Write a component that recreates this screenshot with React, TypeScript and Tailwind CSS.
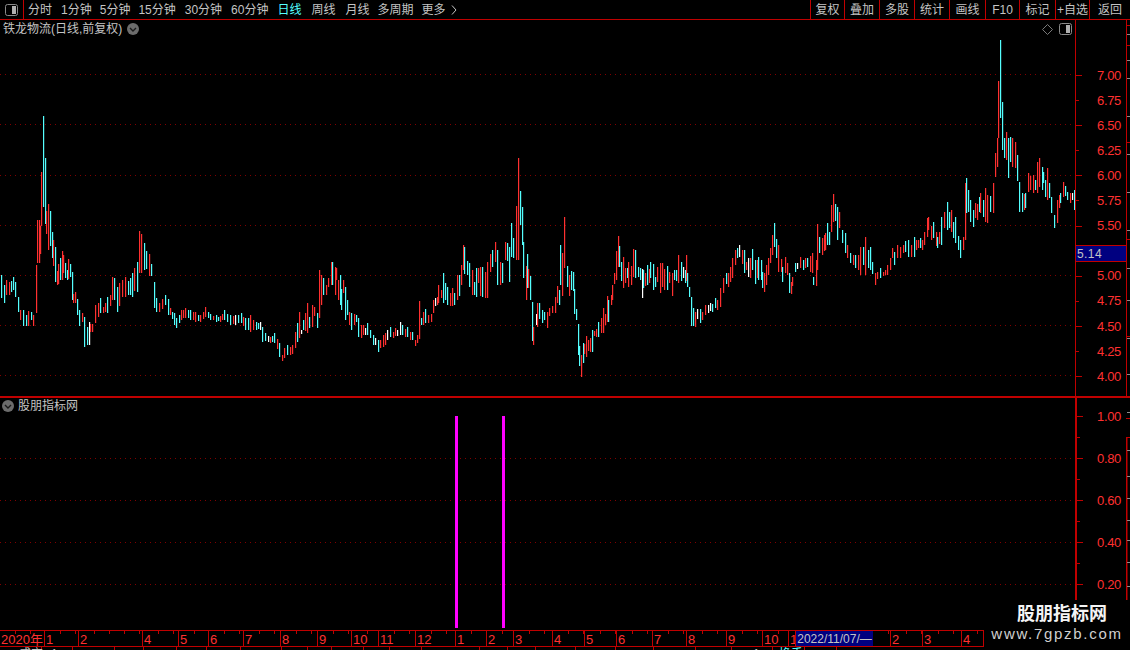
import React from 'react'

const RED = '#ff3030'
const CYAN = '#54ffff'
const WHITE = '#ffffff'
const LINE = '#c00000'

// [x, top, bottom, colour] read off the chart, gaps get filled in below
type K = [number, number, number, string]
const R = RED
const C = CYAN
const W = WHITE

const keys: K[] = [
  [1, 275, 298, C], [4, 285, 303, C], [6, 280, 295, R], [9, 282, 295, R], [13, 277, 290, C], [15, 282, 297, C],
  [18, 297, 312, C], [20, 310, 320, R], [23, 310, 326, C], [26, 315, 326, C], [28, 311, 326, R], [31, 312, 320, C], [33, 315, 326, R],
  [36, 265, 313, R], [37, 220, 263, R], [39, 220, 263, R], [40, 226, 254, R], [41, 172, 226, R], [43, 116, 207, C],
  [45, 158, 224, C], [46, 211, 234, R], [48, 204, 250, R], [50, 211, 246, C], [52, 232, 258, C], [53, 240, 266, R],
  [55, 247, 282, C], [57, 271, 285, R], [58, 264, 284, R], [60, 258, 280, C], [62, 251, 280, R], [63, 255, 273, R],
  [65, 263, 278, C], [67, 270, 280, C], [68, 259, 279, R], [70, 264, 277, C], [72, 272, 300, C], [73, 294, 303, R],
  [75, 292, 303, R], [77, 299, 315, C], [79, 310, 326, C], [82, 313, 322, R], [84, 317, 347, C], [87, 327, 345, C],
  [89, 322, 345, W], [90, 324, 332, R], [92, 324, 332, R], [95, 305, 323, R], [100, 298, 313, C], [103, 307, 313, R], [107, 297, 313, C],
  [110, 295, 306, R], [112, 277, 300, R], [114, 278, 300, C], [117, 287, 312, C], [119, 283, 306, R], [122, 280, 297, R],
  [125, 277, 297, R], [128, 281, 295, C], [132, 273, 297, C], [134, 268, 291, R], [137, 262, 292, C], [139, 231, 273, R],
  [141, 234, 273, R], [144, 243, 270, C], [146, 251, 269, C], [149, 254, 276, R], [151, 264, 276, C],
  [154, 282, 308, C], [156, 298, 312, C], [159, 303, 312, R], [162, 299, 309, R], [165, 295, 305, C], [168, 299, 315, C],
  [170, 308, 315, R], [174, 313, 325, C], [176, 318, 328, C], [181, 310, 320, R], [185, 308, 318, R], [190, 310, 320, C],
  [195, 312, 322, R], [200, 315, 322, R], [205, 307, 317, R], [210, 314, 320, C], [216, 315, 322, C], [220, 316, 322, R],
  [224, 310, 320, C], [230, 315, 325, C], [235, 315, 325, W], [241, 313, 323, C], [245, 318, 330, C], [250, 315, 332, R],
  [256, 322, 330, C], [260, 322, 330, W], [262, 327, 342, C], [268, 336, 342, W], [270, 337, 343, R], [274, 333, 343, C],
  [279, 343, 357, C], [282, 355, 361, R], [284, 348, 358, R], [287, 345, 355, C], [290, 347, 355, R],
  [292, 345, 354, R], [295, 332, 348, R], [299, 312, 338, R], [301, 330, 334, W], [303, 320, 330, C], [307, 303, 333, R],
  [309, 317, 328, C], [312, 305, 327, R], [314, 307, 316, R], [317, 313, 328, C], [319, 270, 318, R], [321, 275, 305, R],
  [323, 278, 295, C], [326, 285, 295, R], [328, 278, 287, R], [331, 262, 285, R], [332, 262, 285, C], [335, 267, 295, R],
  [336, 268, 280, R], [338, 280, 300, R], [340, 275, 305, C], [341, 289, 310, C], [343, 280, 293, R], [345, 287, 320, C],
  [347, 300, 315, C], [349, 312, 325, R], [351, 313, 330, C], [354, 314, 325, R], [356, 315, 322, C], [358, 318, 337, C],
  [361, 325, 338, R], [363, 325, 335, R], [365, 328, 335, W], [367, 323, 335, C], [370, 330, 338, C], [373, 335, 345, C],
  [375, 338, 345, W], [378, 340, 352, C], [380, 340, 348, R], [383, 335, 347, R], [385, 333, 345, R], [387, 330, 340, W],
  [390, 327, 337, C], [393, 332, 338, R], [395, 328, 336, R], [397, 330, 336, W], [400, 322, 335, W], [402, 325, 335, C],
  [405, 329, 337, R], [407, 327, 337, C], [410, 332, 340, R], [412, 332, 340, C], [415, 340, 346, R], [417, 335, 343, R],
  [419, 301, 339, R], [421, 318, 325, C], [423, 312, 325, R], [425, 309, 323, C], [428, 315, 323, R], [431, 314, 322, R],
  [433, 300, 313, R], [435, 298, 306, W], [437, 297, 305, R], [438, 285, 303, R], [441, 290, 298, R], [443, 273, 303, C],
  [445, 283, 300, C], [447, 287, 305, C], [450, 293, 306, R], [452, 288, 306, R], [454, 293, 305, C], [457, 275, 300, R],
  [459, 275, 296, C], [461, 265, 285, R], [463, 245, 270, R], [464, 247, 274, C], [467, 261, 275, C], [469, 263, 287, C],
  [472, 270, 295, R], [474, 282, 295, C], [476, 268, 297, C], [478, 268, 283, R], [480, 267, 296, R], [482, 267, 297, C],
  [485, 272, 298, R], [487, 262, 298, R], [490, 254, 272, R], [492, 250, 267, C], [495, 242, 262, R], [497, 250, 285, C],
  [500, 262, 285, R], [502, 263, 283, C], [505, 242, 260, R], [507, 243, 261, C], [509, 247, 282, C], [511, 223, 257, C],
  [513, 238, 258, C], [516, 206, 260, R], [518, 158, 260, R], [520, 191, 225, C], [522, 207, 245, C], [523, 242, 278, C],
  [526, 266, 300, R], [527, 254, 288, C], [528, 269, 288, R], [530, 276, 300, C], [532, 302, 341, C], [533, 327, 345, R],
  [536, 314, 325, W], [537, 303, 327, R], [539, 303, 319, C], [542, 310, 323, C], [544, 312, 320, C], [547, 312, 328, R],
  [549, 308, 316, R], [552, 306, 313, R], [555, 297, 313, R], [557, 286, 303, R], [559, 290, 305, C], [560, 245, 285, C],
  [562, 253, 296, R], [564, 217, 268, R], [567, 266, 287, C], [569, 275, 296, R], [571, 271, 290, C], [573, 272, 291, C],
  [574, 289, 314, C], [576, 309, 320, C], [578, 324, 355, C], [579, 346, 366, C], [581, 355, 377, R], [583, 343, 363, C],
  [584, 344, 354, R], [586, 336, 357, R], [588, 340, 351, R], [590, 338, 352, R], [592, 330, 352, C], [594, 331, 336, R],
  [596, 329, 337, R], [598, 322, 337, C], [601, 318, 333, R], [603, 308, 333, R], [605, 314, 325, R], [607, 296, 322, R],
  [608, 300, 322, C], [611, 295, 305, R], [612, 285, 300, R], [614, 273, 284, R], [616, 251, 280, R], [618, 236, 267, R],
  [619, 246, 267, C], [621, 262, 281, C], [623, 257, 288, R], [625, 268, 283, R], [627, 268, 278, C], [628, 262, 287, R],
  [631, 266, 285, R], [633, 249, 277, R], [635, 250, 278, C], [638, 267, 277, C], [640, 268, 280, C], [642, 269, 298, W],
  [643, 270, 288, C], [645, 273, 286, R], [647, 265, 285, C], [649, 269, 283, R], [650, 262, 278, C], [653, 264, 290, C],
  [655, 277, 287, C], [657, 267, 282, R], [660, 263, 293, R], [662, 263, 287, R], [664, 269, 290, R], [667, 266, 290, C],
  [669, 272, 283, R], [672, 273, 296, R], [674, 270, 280, C], [676, 270, 281, C], [678, 255, 283, R], [681, 262, 281, C],
  [683, 267, 278, W], [685, 270, 283, C], [686, 255, 281, R], [687, 273, 287, C], [689, 287, 297, C], [691, 297, 326, C],
  [693, 308, 326, C], [695, 312, 327, R], [697, 309, 319, W], [700, 309, 323, C], [702, 312, 320, R], [705, 305, 315, R],
  [708, 305, 313, W], [710, 303, 311, W], [712, 304, 312, C], [715, 298, 308, C], [717, 300, 310, R], [720, 288, 307, R],
  [723, 278, 293, R], [726, 273, 284, C], [728, 273, 287, R], [732, 258, 278, R], [735, 250, 265, R], [737, 248, 258, C],
  [739, 245, 257, W], [742, 250, 264, R], [744, 250, 273, C], [746, 262, 270, R], [748, 258, 277, W], [750, 258, 278, R],
  [752, 249, 270, C], [755, 260, 284, C], [757, 260, 278, R], [758, 257, 280, C], [761, 260, 280, C], [762, 272, 288, C],
  [764, 273, 292, R], [766, 265, 285, R], [768, 258, 275, R], [770, 248, 263, R], [772, 235, 255, R], [774, 223, 247, C],
  [776, 239, 258, C], [778, 245, 272, R], [781, 259, 272, R], [782, 267, 282, C], [785, 257, 273, R], [787, 263, 275, R],
  [789, 273, 293, C], [791, 282, 294, R], [792, 277, 286, R], [795, 263, 272, C], [797, 263, 269, W], [800, 257, 268, R],
  [803, 260, 270, C], [805, 258, 268, R], [807, 258, 267, C], [810, 256, 272, R], [812, 253, 273, R], [813, 277, 285, C],
  [816, 260, 286, R], [817, 224, 270, R], [819, 237, 253, C], [822, 238, 255, R], [824, 235, 251, R], [825, 233, 250, R],
  [827, 223, 245, C], [829, 232, 245, C], [831, 205, 232, R], [833, 194, 222, R], [835, 204, 221, C], [837, 207, 240, C],
  [839, 212, 228, R], [842, 230, 243, C], [845, 233, 253, C], [847, 245, 258, R], [850, 253, 263, C], [855, 255, 268, C],
  [858, 255, 270, R], [860, 247, 275, R], [863, 247, 265, C], [865, 237, 275, R], [868, 250, 268, C], [870, 247, 270, C],
  [872, 262, 274, C], [875, 273, 285, R], [877, 272, 279, R], [880, 268, 278, C], [883, 272, 276, R], [887, 265, 275, R],
  [890, 258, 270, R], [892, 248, 258, R], [894, 252, 265, C], [897, 245, 258, R], [900, 247, 258, R], [903, 245, 253, R],
  [905, 241, 252, C], [908, 240, 257, C], [911, 245, 257, R], [914, 237, 257, C], [916, 240, 250, R], [920, 238, 248, C],
  [922, 240, 250, R], [924, 232, 245, R], [927, 218, 237, R], [928, 217, 230, R], [931, 226, 240, R], [933, 222, 238, C],
  [936, 232, 246, R], [937, 237, 248, C], [939, 232, 244, R], [941, 217, 245, C], [944, 212, 228, R], [947, 202, 230, C],
  [949, 212, 228, C], [951, 210, 232, R], [953, 222, 238, C], [955, 217, 243, C], [958, 236, 250, C], [960, 240, 258, C],
  [963, 237, 250, R], [965, 183, 240, R], [966, 178, 213, C], [968, 190, 212, C], [970, 200, 222, C], [973, 210, 227, C],
  [975, 203, 218, R], [977, 204, 220, R], [979, 197, 212, C], [980, 193, 213, R], [983, 200, 217, C], [985, 188, 222, R],
  [987, 195, 223, R], [990, 196, 212, C], [993, 183, 213, R], [995, 153, 177, R], [997, 138, 167, R], [998, 81, 138, R],
  [1000, 40, 118, C], [1002, 102, 150, C], [1004, 138, 158, C], [1006, 132, 160, R], [1008, 138, 178, C], [1010, 137, 162, C],
  [1012, 138, 167, R], [1015, 142, 168, R], [1017, 155, 181, C], [1019, 182, 212, C], [1022, 193, 212, C], [1024, 194, 210, R],
  [1025, 193, 208, C], [1028, 173, 192, R], [1030, 176, 190, R], [1033, 175, 193, R], [1035, 180, 190, C], [1037, 162, 193, R],
  [1039, 158, 187, R], [1042, 167, 190, C], [1043, 172, 183, C], [1045, 180, 197, C], [1047, 168, 200, R], [1049, 183, 198, C],
  [1051, 197, 213, C], [1054, 215, 228, C], [1057, 200, 223, R], [1059, 195, 208, R], [1060, 193, 203, C], [1063, 182, 197, R],
  [1065, 186, 196, C], [1067, 192, 200, C], [1070, 193, 203, R], [1072, 193, 200, W], [1074, 190, 210, C],
]

// keep the roughly 3px bar rhythm where the list above leaves a wider gap
const candles: K[] = keys.flatMap((k, i) => {
  const next = keys[i + 1]
  if (!next || next[0] - k[0] < 4) return [k]
  const mid: K = [
    Math.round((k[0] + next[0]) / 2),
    Math.round((k[1] + next[1]) / 2) + 1,
    Math.round((k[2] + next[2]) / 2) - 1,
    i % 2 === 0 ? R : C,
  ]
  return [k, mid]
})

function Candles() {
  return (
    <>
      {candles.map(([x, top, bottom, color], i) => (
        <rect key={i} x={x} y={top} width={1.2} height={bottom - top} fill={color} />
      ))}
    </>
  )
}

function Grid({ ys }: { ys: number[] }) {
  return (
    <>
      {ys.map((y) => (
        <line
          key={y}
          x1={0}
          x2={1075}
          y1={y + 0.5}
          y2={y + 0.5}
          stroke="#800000"
          strokeDasharray="1 4"
          shapeRendering="crispEdges"
        />
      ))}
    </>
  )
}

function PanelIcon() {
  return (
    <svg width="13" height="12" viewBox="0 0 13 12">
      <rect x="0.5" y="0.5" width="12" height="11" rx="2" fill="none" stroke="#8a8a8a" />
      <rect x="7" y="2" width="4" height="8" fill="#b0b0b0" />
    </svg>
  )
}

function ChevronDot() {
  return (
    <svg width="12" height="12" viewBox="0 0 12 12">
      <circle cx="6" cy="6" r="6" fill="#6c6c6c" />
      <path d="M3 5 L6 8 L9 5" fill="none" stroke="#1a1a1a" strokeWidth="1.4" />
    </svg>
  )
}

const periods = [
  { label: '分时', ml: 'ml-[4px]' },
  { label: '1分钟', ml: 'ml-[9px]' },
  { label: '5分钟', ml: 'ml-[8px]' },
  { label: '15分钟', ml: 'ml-[8px]' },
  { label: '30分钟', ml: 'ml-[9px]' },
  { label: '60分钟', ml: 'ml-[9px]' },
  { label: '日线', ml: 'ml-[9px]', active: true },
  { label: '周线', ml: 'ml-[10px]' },
  { label: '月线', ml: 'ml-[10px]' },
  { label: '多周期', ml: 'ml-[8px]' },
  { label: '更多', ml: 'ml-[8px]' },
]

const tools = [
  { label: '复权', w: 'w-[34px]' },
  { label: '叠加', w: 'w-[35px]' },
  { label: '多股', w: 'w-[35px]' },
  { label: '统计', w: 'w-[35px]' },
  { label: '画线', w: 'w-[36px]' },
  { label: 'F10', w: 'w-[34px]' },
  { label: '标记', w: 'w-[36px]' },
  { label: '+自选', w: 'w-[34px]' },
  { label: '返回', w: 'w-[41px]' },
]

function Toolbar() {
  return (
    <div className="flex h-[20px] shrink-0 items-center border-b border-[#c00000] text-[12px] text-[#c4c4c4]">
      <div className="flex h-full w-[24px] items-center justify-center border-r border-[#c00000]">
        <PanelIcon />
      </div>
      {periods.map((p) => (
        <span key={p.label} className={`${p.ml} ${p.active ? 'text-[#54ffff]' : ''}`}>
          {p.label}
        </span>
      ))}
      <svg width="6" height="10" viewBox="0 0 6 10" className="ml-[5px]">
        <path d="M1 0.5 L5 5 L1 9.5" fill="none" stroke="#c4c4c4" />
      </svg>
      <div className="ml-auto flex h-full">
        {tools.map((t) => (
          <div key={t.label} className={`${t.w} flex items-center justify-center whitespace-nowrap border-l border-[#c00000]`}>
            {t.label}
          </div>
        ))}
      </div>
    </div>
  )
}

// 5.25 sits under the blue last-price box, so that row has no label
const prices = ['7.00', '6.75', '6.50', '6.25', '6.00', '5.75', '5.50', '', '5.00', '4.75', '4.50', '4.25', '4.00']
const ratios = ['1.00', '', '0.80', '', '0.60', '', '0.40', '', '0.20']

function AxisRow({ label, long, h }: { label: string; long: boolean; h: string }) {
  return (
    <div className={`${h} flex items-center`}>
      <div className={`h-px bg-[#c00000] ${long ? 'w-[6px]' : 'w-[3px]'}`} />
      {label && <span className="ml-auto w-[29px] text-[13px] tracking-[-0.35px] text-[#ff3030]">{label}</span>}
    </div>
  )
}

// outer ruler on the right window edge, only a sliver of it is visible
function EdgeStrip() {
  const gray = [34, 60, 78, 116, 154, 192, 230, 268, 300, 338, 374, 412, 450, 476, 498, 520, 540, 562, 586]
  const red = [25, 45, 142, 239, 336, 397]
  return (
    <svg width="4" height="600" viewBox="0 0 4 600" className="absolute right-0 top-0">
      <line x1="0.5" x2="0.5" y1="20" y2="397" stroke={LINE} />
      <line x1="0.5" x2="0.5" y1="437" y2="600" stroke={LINE} strokeWidth="2" />
      {gray.map((y) => (
        <line key={y} x1="1" x2="4" y1={y + 0.5} y2={y + 0.5} stroke="#8c8c8c" />
      ))}
      {red.map((y) => (
        <line key={y} x1="0" x2="4" y1={y + 0.5} y2={y + 0.5} stroke={LINE} />
      ))}
      <line x1="0" x2="4" y1="418.5" y2="418.5" stroke={LINE} />
      <line x1="0" x2="4" y1="437.5" y2="437.5" stroke={LINE} />
    </svg>
  )
}

function PricePane() {
  return (
    <div className="flex h-[378px] shrink-0 border-b-2 border-[#c00000]">
      <div className="flex w-[1075px] flex-col">
        <div className="flex h-[18px] shrink-0 items-center text-[12px] text-[#c4c4c4]">
          <span className="ml-[3px]">铁龙物流(日线,前复权)</span>
          <span className="ml-[5px] flex"><ChevronDot /></span>
          <svg width="11" height="11" viewBox="0 0 11 11" className="ml-auto mr-[6px]">
            <path d="M5.5 0.5 L10.5 5.5 L5.5 10.5 L0.5 5.5 Z" fill="none" stroke="#7a7a7a" />
          </svg>
          <span className="mr-[3px] flex"><PanelIcon /></span>
        </div>
        <svg className="block" width="1075" height="358" viewBox="0 38 1075 358">
          <Grid ys={[74, 124, 175, 225, 275, 325, 375]} />
          <Candles />
        </svg>
      </div>
      <div className="relative w-[51px] border-l border-[#c00000] pt-[43px]">
        {prices.map((p, i) => (
          <AxisRow key={i} label={p} long={i % 2 === 0} h="h-[25.08px]" />
        ))}
        <div className="absolute left-0 right-0 top-[225px] flex h-[17px] items-center border-y border-[#c00000] bg-[#000080] pl-[1px] text-[12px] tracking-[0.4px] text-[#c4c4c4]">
          5.14
        </div>
      </div>
    </div>
  )
}

function IndicatorPane() {
  return (
    <div className="flex h-[232px] shrink-0">
      <div className="flex w-[1075px] flex-col">
        <div className="flex h-[16px] shrink-0 items-center text-[12px] text-[#c4c4c4]">
          <span className="ml-[2px] flex"><ChevronDot /></span>
          <span className="ml-[4px]">股朋指标网</span>
        </div>
        <svg className="block" width="1075" height="216" viewBox="0 414 1075 216">
          <Grid ys={[458, 500, 542, 584]} />
          <rect x="455" y="416" width="3" height="212" fill="#ff00ff" />
          <rect x="502" y="416" width="3" height="212" fill="#ff00ff" />
        </svg>
      </div>
      <div className="h-[202px] w-[51px] border-l-2 border-[#c00000] pt-[8px]">
        {ratios.map((r, i) => (
          <AxisRow key={i} label={r} long={r !== ''} h="h-[21px]" />
        ))}
      </div>
    </div>
  )
}

const months = [
  { label: '2020年', w: 'w-[45px]' },
  { label: '1', w: 'w-[34px]' },
  { label: '2', w: 'w-[64px]' },
  { label: '4', w: 'w-[36px]' },
  { label: '5', w: 'w-[30px]' },
  { label: '6', w: 'w-[35px]' },
  { label: '7', w: 'w-[37px]' },
  { label: '8', w: 'w-[37px]' },
  { label: '9', w: 'w-[34px]' },
  { label: '10', w: 'w-[27px]' },
  { label: '11', w: 'w-[37px]' },
  { label: '12', w: 'w-[40px]' },
  { label: '1', w: 'w-[31px]' },
  { label: '2', w: 'w-[27px]' },
  { label: '3', w: 'w-[39px]' },
  { label: '4', w: 'w-[32px]' },
  { label: '5', w: 'w-[32px]' },
  { label: '6', w: 'w-[36px]' },
  { label: '7', w: 'w-[34px]' },
  { label: '8', w: 'w-[40px]' },
  { label: '9', w: 'w-[36px]' },
  { label: '10', w: 'w-[26px]' },
  { label: '1', w: 'w-[7px]' },
]

const monthsAfter = [
  { label: '', w: 'w-[18px]' },
  { label: '2', w: 'w-[32px]' },
  { label: '3', w: 'w-[39px]' },
  { label: '4', w: 'w-[22px]' },
]

function MonthCell({ label, w }: { label: string; w: string }) {
  return (
    <div className={`${w} h-full shrink-0 overflow-hidden border-r border-[#c00000] pl-[1px]`}>
      <div className="h-[3px] w-full bg-[repeating-linear-gradient(90deg,transparent_0,transparent_14px,#c00000_14px,#c00000_15px)]" />
      <div className="-mt-[2px] text-[13px] leading-[16px] text-[#ff3030]">{label}</div>
    </div>
  )
}

function TimeAxis() {
  return (
    <div className="flex h-[17px] w-[984px] shrink-0 items-stretch border-y border-[#c00000]">
      {months.map((m, i) => (
        <MonthCell key={i} label={m.label} w={m.w} />
      ))}
      <div className="flex w-[77px] shrink-0 items-center justify-center whitespace-nowrap bg-[#000080] text-[12px] text-[#c4c4c4]">
        2022/11/07/—
      </div>
      {monthsAfter.map((m, i) => (
        <MonthCell key={i} label={m.label} w={m.w} />
      ))}
    </div>
  )
}

const statusCells: { w: string; text?: string; cls?: string }[] = [
  { w: 'w-[42px]', text: '成交', cls: 'text-[#c4c4c4] pl-[19px]' },
  { w: 'w-[31px]', text: '1', cls: 'text-[#c4c4c4] pl-[9px]' },
  { w: 'w-[42px]' }, { w: 'w-[29px]' }, { w: 'w-[33px]' }, { w: 'w-[30px]' }, { w: 'w-[34px]' },
  { w: 'w-[41px]' }, { w: 'w-[26px]' }, { w: 'w-[24px]' }, { w: 'w-[32px]' }, { w: 'w-[26px]' },
  { w: 'w-[32px]' }, { w: 'w-[58px]' }, { w: 'w-[28px]' }, { w: 'w-[28px]' }, { w: 'w-[40px]' },
  { w: 'w-[40px]' }, { w: 'w-[38px]' }, { w: 'w-[42px]' }, { w: 'w-[36px]' },
  { w: 'w-[41px]', text: '1', cls: 'text-[#c4c4c4] pl-[21px]' },
  { w: 'w-[32px]', text: '换手', cls: 'text-[#54ffff] pl-[6px]' },
  { w: 'w-[32px]' },
]

// next row down is cut off by the window edge, only the tops of the text show
function StatusRow() {
  return (
    <div className="flex h-[3px] w-[984px] overflow-hidden">
      {statusCells.map((c, i) => (
        <div key={i} className={`${c.w} shrink-0 whitespace-nowrap border-r border-[#c00000] text-[12px] leading-[14px] ${c.cls ?? ''}`}>
          {c.text}
        </div>
      ))}
    </div>
  )
}

function Watermark() {
  return (
    <div className="absolute bottom-0 right-0 flex h-[50px] w-[146px] flex-col items-center bg-black pt-[3px]">
      <div className="pl-[10px] text-[18px] font-bold leading-[22px] text-[#f4f4f4]">股朋指标网</div>
      <div className="whitespace-nowrap text-[15px] leading-[17px] tracking-[1.7px] text-[#d0d0d0]">www.7gpzb.com</div>
    </div>
  )
}

export default function App() {
  return (
    <div
      className="relative flex h-[650px] w-[1130px] flex-col overflow-hidden bg-black"
      style={{ fontFamily: '"Liberation Sans", "Noto Sans CJK SC", sans-serif' }}
    >
      <Toolbar />
      <PricePane />
      <IndicatorPane />
      <TimeAxis />
      <StatusRow />
      <EdgeStrip />
      <Watermark />
    </div>
  )
}
